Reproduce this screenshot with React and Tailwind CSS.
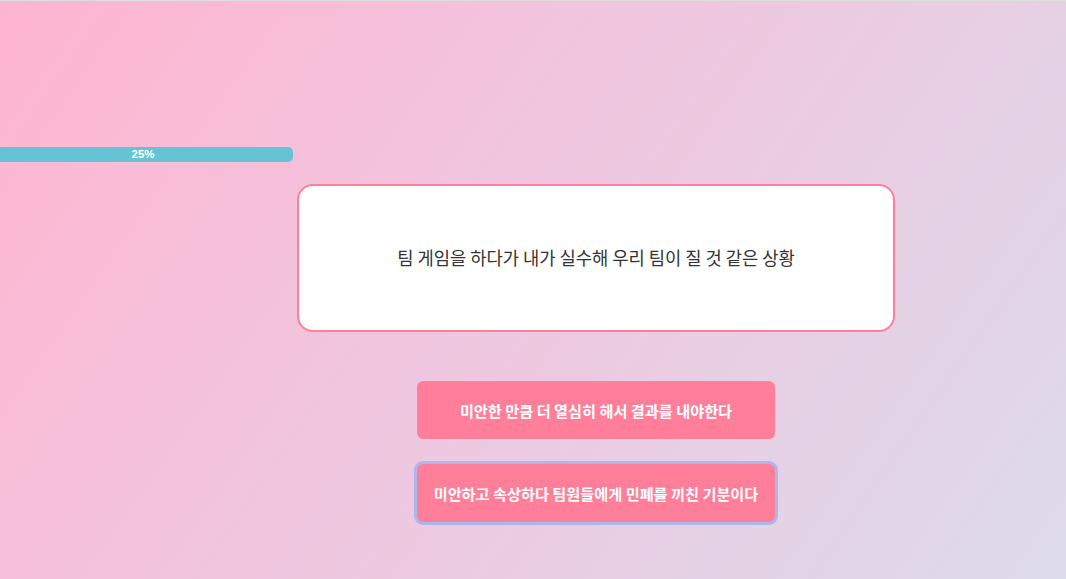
const QUESTION = '팀 게임을 하다가 내가 실수해 우리 팀이 질 것 같은 상황'

const ANSWERS = [
  { id: 'a', label: '미안한 만큼 더 열심히 해서 결과를 내야한다' },
  { id: 'b', label: '미안하고 속상하다 팀원들에게 민폐를 끼친 기분이다', focused: true },
]

export default function App() {
  return (
    <div
      className="min-h-[579px] w-full border-t border-[#dedede] bg-[linear-gradient(125deg,#ffb5d0_0%,#f0c6df_45%,#dcdbea_100%)]
                 font-['Noto_Sans_CJK_KR','Noto_Sans',sans-serif]"
    >
      {/* ── progress ── */}
      <div className="pt-[146px]">
        <div className="flex h-[15px] w-[293px] items-center justify-center rounded-r-[5px] bg-[#64c3d4] pr-[7px]">
          <span className="font-['Liberation_Sans',sans-serif] text-[11.5px] font-bold leading-none text-white">
            25%
          </span>
        </div>
      </div>

      {/* ── question + answers ── */}
      <div className="ml-[297px] flex w-[598px] flex-col items-center pt-[22px]">
        <div className="flex h-[148px] w-full items-center justify-center rounded-[16px] border-2 border-[#ff7f9b] bg-white">
          <p className="text-[17.7px] leading-none text-[#333]">{QUESTION}</p>
        </div>

        <div className="mt-[49px] flex flex-col gap-[25px]">
          {ANSWERS.map(({ id, label, focused }) => (
            <button
              key={id}
              className={
                focused
                  ? 'flex h-[58px] w-[358px] items-center justify-center rounded-[6px] bg-[#ff7f9b] text-[15.2px] font-semibold text-white ring-[3px] ring-[#aab8ec]'
                  : 'flex h-[58px] w-[358px] items-center justify-center rounded-[6px] bg-[#ff7f9b] text-[15.2px] font-semibold text-white'
              }
            >
              {label}
            </button>
          ))}
        </div>
      </div>
    </div>
  )
}
